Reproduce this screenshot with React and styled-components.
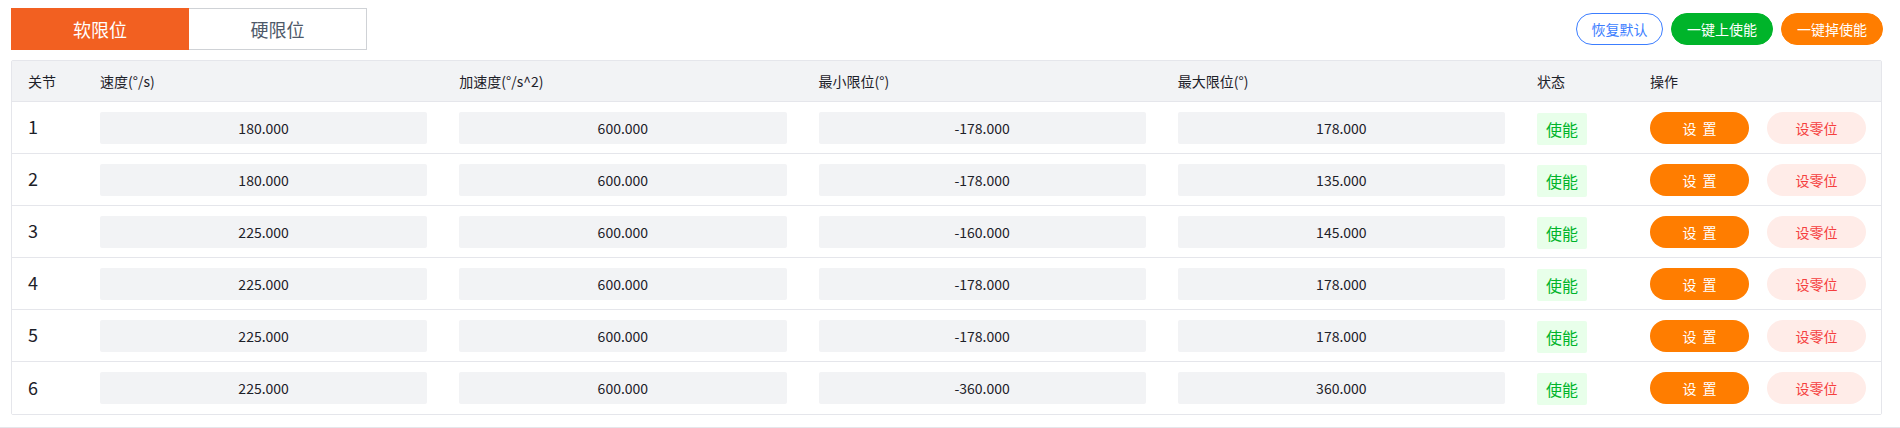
import styled, { createGlobalStyle } from "styled-components";

const GlobalStyle = createGlobalStyle`
  body {
    margin: 0;
    background: #fff;
    font-family: "Noto Sans CJK SC", "Noto Sans", sans-serif;
    color: #1d2129;
  }
`;

const Page = styled.div`
  width: 1900px;
  height: 428px;
  box-sizing: border-box;
  border-bottom: 1px solid #e5e6eb;
  padding: 8px 18px 0 11px;
  overflow: hidden;
`;

const TopBar = styled.div`
  display: flex;
  justify-content: space-between;
  align-items: center;
  height: 42px;
`;

const Tabs = styled.div`
  display: flex;
  height: 42px;
`;

const Tab = styled.div`
  width: 178px;
  box-sizing: border-box;
  display: flex;
  align-items: center;
  justify-content: center;
  font-size: 18px;
  color: ${(p) => (p.$active ? "#fff" : "#4e5969")};
  background: ${(p) => (p.$active ? "#f26021" : "#fff")};
  border: 1px solid ${(p) => (p.$active ? "#f26021" : "#cfd2d6")};
  border-left: ${(p) => (p.$active ? "" : "none")};
`;

const Actions = styled.div`
  display: flex;
  gap: 8px;
  margin-right: -1px;
`;

const PillButton = styled.button`
  height: 32px;
  width: ${(p) => p.$w}px;
  border-radius: 16px;
  font-family: inherit;
  font-size: 14px;
  padding: 0;
  cursor: pointer;
  box-sizing: border-box;
  color: ${(p) => p.$color};
  background: ${(p) => p.$bg};
  border: 1px solid ${(p) => p.$border || p.$bg};
`;

const Table = styled.div`
  margin-top: 10px;
  border: 1px solid #e5e6eb;
  border-radius: 2px;
`;

const Row = styled.div`
  display: grid;
  grid-template-columns: 72px repeat(4, 1fr) 113px 231px;
  align-items: center;
  padding-left: 16px;
  height: ${(p) => (p.$head ? 41 : 52)}px;
  background: ${(p) => (p.$head ? "#f2f3f5" : "#fff")};
  border-bottom: ${(p) => (p.$last ? "none" : "1px solid #e5e6eb")};
  box-sizing: border-box;
`;

const HeadCell = styled.div`
  font-size: 14px;
  color: #1d2129;
`;

const IndexCell = styled.div`
  font-size: 18px;
  color: #1d2129;
  margin-top: -3px;
`;

const ValueBox = styled.div`
  width: calc(100% - 32px);
  height: 32px;
  border-radius: 2px;
  background: #f2f3f5;
  display: flex;
  align-items: center;
  justify-content: center;
  font-size: 14px;
  color: #1d2129;
`;

const StatusTag = styled.div`
  width: 50px;
  height: 32px;
  margin-top: 2px;
  border-radius: 2px;
  background: #e8ffea;
  color: #00b42a;
  font-size: 16px;
  display: flex;
  align-items: center;
  justify-content: center;
`;

const OpCell = styled.div`
  display: flex;
  gap: 18px;
`;

const RowButton = styled.button`
  width: 99px;
  height: 32px;
  border-radius: 16px;
  border: none;
  padding: 0;
  font-family: inherit;
  font-size: 14px;
  cursor: pointer;
  letter-spacing: ${(p) => (p.$spaced ? "6px" : "0")};
  text-indent: ${(p) => (p.$spaced ? "6px" : "0")};
  color: ${(p) => (p.$primary ? "#fff" : "#f53f3f")};
  background: ${(p) => (p.$primary ? "#ff7d00" : "#ffece8")};
`;

const rows = [
  [1, "180.000", "600.000", "-178.000", "178.000"],
  [2, "180.000", "600.000", "-178.000", "135.000"],
  [3, "225.000", "600.000", "-160.000", "145.000"],
  [4, "225.000", "600.000", "-178.000", "178.000"],
  [5, "225.000", "600.000", "-178.000", "178.000"],
  [6, "225.000", "600.000", "-360.000", "360.000"],
];

export default function App() {
  return (
    <>
      <GlobalStyle />
      <Page>
        <TopBar>
          <Tabs>
            <Tab $active>软限位</Tab>
            <Tab>硬限位</Tab>
          </Tabs>
          <Actions>
            <PillButton $w={87} $bg="#fff" $border="#3c7eff" $color="#3c7eff">
              恢复默认
            </PillButton>
            <PillButton $w={102} $bg="#00b42a" $color="#fff">
              一键上使能
            </PillButton>
            <PillButton $w={102} $bg="#ff7d00" $color="#fff">
              一键掉使能
            </PillButton>
          </Actions>
        </TopBar>
        <Table>
          <Row $head>
            <HeadCell>关节</HeadCell>
            <HeadCell>速度(°/s)</HeadCell>
            <HeadCell>加速度(°/s^2)</HeadCell>
            <HeadCell>最小限位(°)</HeadCell>
            <HeadCell>最大限位(°)</HeadCell>
            <HeadCell>状态</HeadCell>
            <HeadCell>操作</HeadCell>
          </Row>
          {rows.map(([id, speed, acc, min, max], i) => (
            <Row key={id} $last={i === rows.length - 1}>
              <IndexCell>{id}</IndexCell>
              <ValueBox>{speed}</ValueBox>
              <ValueBox>{acc}</ValueBox>
              <ValueBox>{min}</ValueBox>
              <ValueBox>{max}</ValueBox>
              <StatusTag>使能</StatusTag>
              <OpCell>
                <RowButton $primary $spaced>
                  设置
                </RowButton>
                <RowButton>设零位</RowButton>
              </OpCell>
            </Row>
          ))}
        </Table>
      </Page>
    </>
  );
}
